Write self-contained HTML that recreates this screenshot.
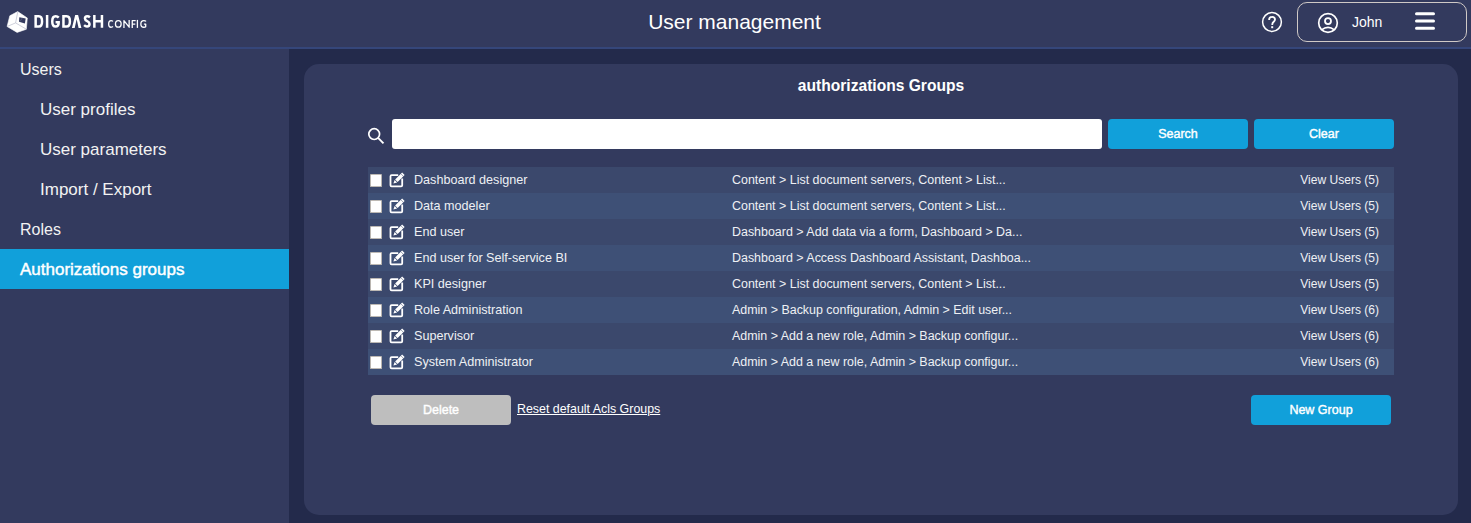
<!DOCTYPE html>
<html><head><meta charset="utf-8">
<style>
*{margin:0;padding:0;box-sizing:border-box}
html,body{width:1471px;height:523px;overflow:hidden}
body{background:#232a4b;font-family:"Liberation Sans",sans-serif;color:#fff;position:relative}
.hdr{position:absolute;left:0;top:0;width:1471px;height:47px;background:#333a5e}
.hline{position:absolute;left:0;top:47px;width:1471px;height:2px;background:#35467a}
.side{position:absolute;left:0;top:49px;width:289px;height:474px;background:#333a5e}
.panel{position:absolute;left:304px;top:64px;width:1154px;height:451px;background:#333a5e;border-radius:15px}
.title{position:absolute;left:-1px;width:1471px;top:8px;height:28px;line-height:28px;text-align:center;font-size:21px;color:#fff}
.mi{position:absolute;left:0;width:289px;height:40px;line-height:40px;font-size:16px;color:#f2f2f2;padding-left:20px;white-space:nowrap}
.mi.sub{padding-left:40px;font-size:17px}
.mi.act{background:#11a0da;color:#fff;font-size:17px;-webkit-text-stroke:.45px #fff}
.mi span{position:relative;top:1px}
.ptitle{position:absolute;left:304px;width:1154px;top:74.5px;height:22px;line-height:22px;text-align:center;font-size:15.6px;font-weight:bold}
.inp{position:absolute;left:392px;top:119px;width:710px;height:30px;background:#fff;border-radius:3px}
.btn{position:absolute;width:140px;height:30px;line-height:30px;text-align:center;border-radius:4px;background:#11a0da;font-size:12.5px;color:#fff;-webkit-text-stroke:.4px currentColor}
.tbl{position:absolute;left:368px;top:167px;width:1026px}
.row{position:relative;height:26px;line-height:26px;font-size:12.6px;color:#eef0f4;background:#3b486c;white-space:nowrap}
.row:nth-child(even){background:#3e5076}
.cb{position:absolute;left:2px;top:7px;width:12px;height:13px;background:#fff;border-radius:1.5px;box-shadow:inset 0 0 0 .8px #a8a39c}
.ed{position:absolute;left:21px;top:5px;width:16px;height:16px}
.nm{position:absolute;left:46px;top:-0.5px}
.ac{position:absolute;left:364px;top:-0.5px;font-size:12.45px}
.vu{position:absolute;right:15px;top:-0.5px;font-size:12.05px}
</style></head><body>
<div class="hdr"></div>
<div class="hline"></div>
<div class="side"></div>
<div class="panel"></div>

<!-- logo -->
<svg style="position:absolute;left:0;top:0" width="150" height="40" viewBox="0 0 150 40">
  <g transform="translate(0 .7)">
  <path d="M17.7 10.9 L27.3 17.3 L26.3 28.6 L17.1 31.7 L7.1 25.8 L9.8 15.1 Z" fill="#fff" stroke="#fff" stroke-width=".6" stroke-linejoin="round"/>
  <path d="M17.7 11.4 L15.6 22.2 L7.6 25.6 M15.6 22.2 L26 28.3" fill="none" stroke="#b9bccb" stroke-width=".7"/>
  <path d="M19.3 16.6 L25.7 17.7 L24.9 22.7 L19 21.1 Z" fill="#353b60"/>
  <path d="M20.2 20.6 L22.3 17.2" stroke="#6a6f8c" stroke-width=".6"/>
  </g>
  <g fill="none" stroke="#fff" stroke-width="2.5">
    <path d="M35.65 16.35 V26.45 H38.8 C41.3 26.45 42.05 24.2 42.05 21.4 C42.05 18.6 41.3 16.35 38.8 16.35 Z"/>
    <path d="M47.1 15 V27.8"/>
    <path d="M58.7 17.6 C58 16.8 57 16.35 55.6 16.35 C53.3 16.35 52.25 18.3 52.25 21.4 C52.25 24.5 53.3 26.45 55.6 26.45 C57.6 26.45 58.65 25.4 58.65 23 V22.2 H55.6"/>
    <path d="M63.45 16.35 V26.45 H66.6 C69.1 26.45 69.9 24.2 69.9 21.4 C69.9 18.6 69.1 16.35 66.6 16.35 Z"/>
    <path d="M89.9 17.3 C89.2 16.6 88.3 16.35 87.2 16.35 C85.8 16.35 84.95 17.2 84.95 18.6 C84.95 21.7 89.55 20.7 89.55 24 C89.55 25.6 88.6 26.45 87 26.45 C85.9 26.45 84.9 26 84.1 25.2"/>
    <path d="M94.35 15 V27.8 M101.95 15 V27.8 M94.35 21.3 H101.95"/>
  </g>
  <path d="M71.9 27.9 L75.2 15 L78.1 15 L81.4 27.9 L78.6 27.9 L76.65 19.2 L74.7 27.9 Z" fill="#fff"/>
  <g fill="none" stroke="#fff" stroke-width="1.3" stroke-linejoin="round">
    <path d="M113 21.4 C112.4 20.8 111.7 20.6 111 20.6 C109.4 20.6 108.65 22 108.65 23.9 C108.65 25.8 109.4 27.25 111 27.25 C111.7 27.25 112.4 27.1 113 26.6"/>
    <ellipse cx="118.3" cy="23.9" rx="2.85" ry="3.3"/>
    <path d="M123.95 27.9 V20.6 L129.15 27.2 V19.9"/>
    <path d="M132.25 27.9 V20.6 H135.7 M132.25 24.1 H135.3"/>
    <path d="M137.4 19.9 V27.9"/>
    <path d="M146.1 21.4 C145.5 20.8 144.7 20.6 143.9 20.6 C142.1 20.6 140.85 21.8 140.85 23.9 C140.85 26 142.1 27.25 143.9 27.25 C144.8 27.25 145.4 27 145.7 26.7 V24.1 H143.9"/>
  </g>
</svg>

<div class="title">User management</div>

<!-- help -->
<svg style="position:absolute;left:1261px;top:11px" width="22" height="22" viewBox="0 0 22 22">
  <circle cx="11" cy="11" r="9.4" fill="none" stroke="#fff" stroke-width="1.5"/>
  <path d="M8.1 9 C8.1 7 9.3 5.9 11.1 5.9 C12.9 5.9 14 7.1 14 8.6 C14 10.7 11.3 10.9 11.3 13.2 V14" fill="none" stroke="#fff" stroke-width="1.8"/>
  <rect x="10.2" y="15.2" width="2" height="2" fill="#fff"/>
</svg>

<!-- user box -->
<div style="position:absolute;left:1297px;top:2px;width:170px;height:40px;border:1.3px solid #cfc9c6;border-radius:10px"></div>
<svg style="position:absolute;left:1317px;top:12px" width="22" height="22" viewBox="0 0 22 22">
  <circle cx="11" cy="11" r="9.3" fill="none" stroke="#fff" stroke-width="1.7"/>
  <circle cx="11" cy="9.1" r="3" fill="none" stroke="#fff" stroke-width="1.8"/>
  <path d="M4.6 17.9 Q11 12.9 17.4 17.9" fill="none" stroke="#fff" stroke-width="1.8"/>
</svg>
<div style="position:absolute;left:1352px;top:12px;height:20px;line-height:20px;font-size:14px;color:#fff">John</div>
<svg style="position:absolute;left:1414px;top:11px" width="22" height="20" viewBox="0 0 22 20">
  <path d="M2.5 2.8 H19.5 M2.5 10 H19.5 M2.5 17.2 H19.5" stroke="#fff" stroke-width="3" stroke-linecap="round"/>
</svg>

<!-- sidebar menu -->
<div class="mi" style="top:49px"><span>Users</span></div>
<div class="mi sub" style="top:89px"><span>User profiles</span></div>
<div class="mi sub" style="top:129px"><span>User parameters</span></div>
<div class="mi sub" style="top:169px"><span>Import / Export</span></div>
<div class="mi" style="top:209px"><span>Roles</span></div>
<div class="mi act" style="top:249px"><span>Authorizations groups</span></div>

<div class="ptitle">authorizations Groups</div>

<!-- search -->
<svg style="position:absolute;left:366px;top:126px" width="20" height="20" viewBox="0 0 20 20">
  <circle cx="8.2" cy="8.1" r="5.4" fill="none" stroke="#fff" stroke-width="1.7"/>
  <path d="M12.1 11.9 L17.5 17.3" stroke="#fff" stroke-width="1.9"/>
</svg>
<div class="inp"></div>
<div class="btn" style="left:1108px;top:119px">Search</div>
<div class="btn" style="left:1254px;top:119px">Clear</div>

<div class="tbl">
  <div class="row"><div class="cb"></div><svg class="ed" viewBox="0 0 16 16"><use href="#edit"/></svg><span class="nm">Dashboard designer</span><span class="ac">Content &gt; List document servers, Content &gt; List...</span><span class="vu">View Users (5)</span></div>
  <div class="row"><div class="cb"></div><svg class="ed" viewBox="0 0 16 16"><use href="#edit"/></svg><span class="nm">Data modeler</span><span class="ac">Content &gt; List document servers, Content &gt; List...</span><span class="vu">View Users (5)</span></div>
  <div class="row"><div class="cb"></div><svg class="ed" viewBox="0 0 16 16"><use href="#edit"/></svg><span class="nm">End user</span><span class="ac">Dashboard &gt; Add data via a form, Dashboard &gt; Da...</span><span class="vu">View Users (5)</span></div>
  <div class="row"><div class="cb"></div><svg class="ed" viewBox="0 0 16 16"><use href="#edit"/></svg><span class="nm">End user for Self-service BI</span><span class="ac">Dashboard &gt; Access Dashboard Assistant, Dashboa...</span><span class="vu">View Users (5)</span></div>
  <div class="row"><div class="cb"></div><svg class="ed" viewBox="0 0 16 16"><use href="#edit"/></svg><span class="nm">KPI designer</span><span class="ac">Content &gt; List document servers, Content &gt; List...</span><span class="vu">View Users (5)</span></div>
  <div class="row"><div class="cb"></div><svg class="ed" viewBox="0 0 16 16"><use href="#edit"/></svg><span class="nm">Role Administration</span><span class="ac">Admin &gt; Backup configuration, Admin &gt; Edit user...</span><span class="vu">View Users (6)</span></div>
  <div class="row"><div class="cb"></div><svg class="ed" viewBox="0 0 16 16"><use href="#edit"/></svg><span class="nm">Supervisor</span><span class="ac">Admin &gt; Add a new role, Admin &gt; Backup configur...</span><span class="vu">View Users (6)</span></div>
  <div class="row"><div class="cb"></div><svg class="ed" viewBox="0 0 16 16"><use href="#edit"/></svg><span class="nm">System Administrator</span><span class="ac">Admin &gt; Add a new role, Admin &gt; Backup configur...</span><span class="vu">View Users (6)</span></div>
</div>

<svg width="0" height="0" style="position:absolute">
  <defs>
    <g id="edit">
      <path d="M9.2 3.1 H2.6 Q1.5 3.1 1.5 4.2 V13.2 Q1.5 14.3 2.6 14.3 H12.1 Q13.2 14.3 13.2 13.2 V6.6" fill="none" stroke="#fff" stroke-width="1.8"/>
      <path d="M6.1 7.4 L13.1 0.4 L15.6 2.9 L8.6 9.9 Z" fill="#fff"/>
      <path d="M5.6 7.9 L8.1 10.4 L4.4 11.6 Z" fill="#fff"/>
      <path d="M11.7 1.6 L14.4 4.3" stroke="#3b486c" stroke-width=".5"/>
    </g>
  </defs>
</svg>

<div class="btn" style="left:371px;top:395px;background:#bebebe;color:#fff">Delete</div>
<div style="position:absolute;left:517px;top:399px;height:20px;line-height:20px;font-size:12.4px;color:#fff;text-decoration:underline">Reset default Acls Groups</div>
<div class="btn" style="left:1251px;top:395px">New Group</div>

</body></html>
